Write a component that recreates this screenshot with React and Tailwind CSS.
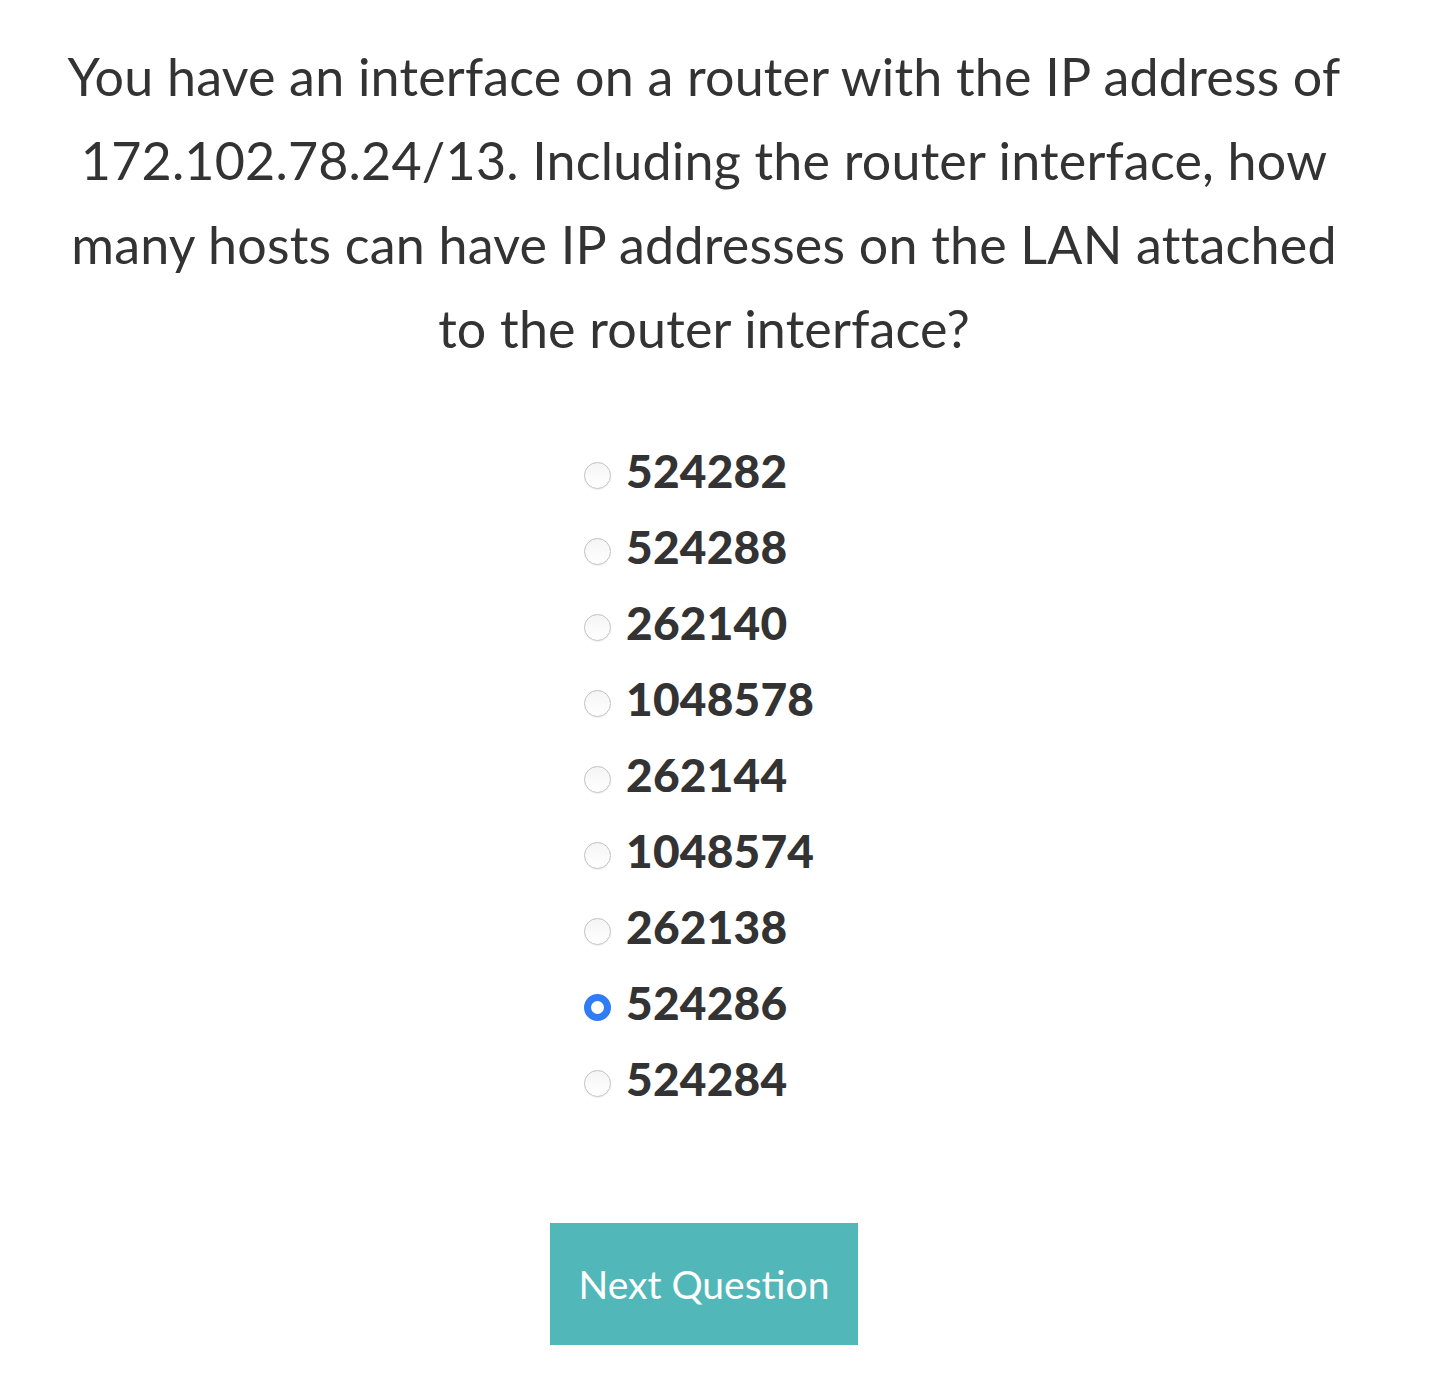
import { useState } from "react"

const options = ["524282", "524288", "262140", "1048578", "262144", "1048574", "262138", "524286", "524284"]

export default function App() {
  const [selected, setSelected] = useState("524286")

  return (
    <div className="min-h-screen bg-white text-[#333333] font-['Lato',sans-serif]">
      <div className="w-[1408px]">
        <div className="pt-[34px] px-[40px]">
          <h1 className="text-center text-[52px] leading-[84px] font-normal tracking-[0.2px]">
            You have an interface on a router with the IP address of
            <br />
            172.102.78.24/13. Including the router interface, how
            <br />
            many hosts can have IP addresses on the LAN attached
            <br />
            to the router interface?
          </h1>
        </div>

        <div className="flex justify-center mt-[63px]">
          <div className="w-[240px] flex flex-col">
            {options.map((opt) => {
              const checked = selected === opt
              return (
                <label key={opt} className="flex items-center h-[76px] cursor-pointer">
                  <input
                    type="radio"
                    name="answer"
                    checked={checked}
                    onChange={() => setSelected(opt)}
                    className={
                      checked
                        ? "appearance-none shrink-0 w-[27px] h-[27px] mt-[8px] rounded-full bg-[#2f7cf6] border-[7px] border-[#2f7cf6] relative after:content-[''] after:absolute after:inset-0 after:rounded-full after:bg-white"
                        : "appearance-none shrink-0 w-[27px] h-[27px] mt-[8px] rounded-full bg-gradient-to-b from-[#f5f5f5] to-white border border-[#c2c2c2] shadow-[0_1px_1px_rgba(0,0,0,0.06)]"
                    }
                  />
                  <span className="ml-[15px] text-[46px] font-black leading-none tracking-[0.2px]">{opt}</span>
                </label>
              )
            })}
          </div>
        </div>

        <div className="flex justify-center mt-[106px] pb-[52px]">
          <button className="w-[308px] h-[122px] bg-[#52b7b9] text-white text-[39px] font-normal">
            Next Question
          </button>
        </div>
      </div>
    </div>
  )
}
